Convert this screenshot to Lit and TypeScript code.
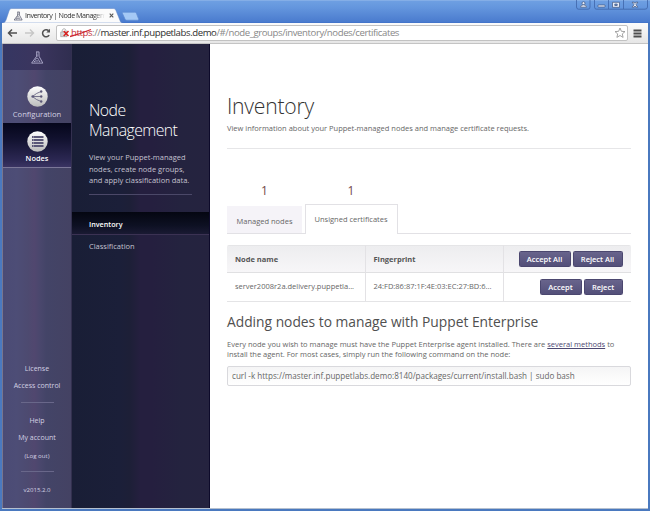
import { LitElement, html, css, svg } from "lit";
import { customElement } from "lit/decorators.js";

const flask = svg`
  <path d="M6 .9h3.2M6.7 1v4.2L1.6 12.1h11.2L9 5.2V1" fill="none" stroke="currentColor" stroke-width="1"/>
  <circle cx="7" cy="8.7" r="1.5" fill="none" stroke="currentColor" stroke-width=".8"/>
  <circle cx="4.7" cy="10.5" r=".8" fill="currentColor"/>
  <circle cx="9.5" cy="10.3" r=".8" fill="currentColor"/>
  <path d="M7 3.4v2.4" stroke="currentColor" stroke-width=".9"/>`;

@customElement("browser-chrome")
export class BrowserChrome extends LitElement {
  static styles = css`
    :host { display: block; font-family: "Open Sans", "Noto Sans", sans-serif; }
    svg { display: block; flex: none; }
    .title {
      height: 23px; position: relative; display: flex; align-items: flex-end;
      background: linear-gradient(#9abdeb 0, #6e9fe2 1px, #6597de 7px, #4a7bce 22px, #3c6ec6 23px);
    }
    .shape { position: absolute; left: 0; top: 8px; }
    .tab {
      position: relative; display: flex; align-items: center; height: 15px;
      margin-left: 13px; width: 104px; color: #4d5166;
    }
    .name {
      width: 80px; margin-left: 2px; white-space: nowrap;
      font: 7.2px/15px "Open Sans", sans-serif; letter-spacing: -.5px; color: #333;
      -webkit-mask-image: linear-gradient(90deg, #000 86%, transparent);
      mask-image: linear-gradient(90deg, #000 86%, transparent);
    }
    .close { margin-left: 4px; }
    .controls { position: absolute; right: 1px; top: 0; }
    .bar {
      height: 21px; box-sizing: border-box; display: flex; align-items: center;
      margin: 0 2px; padding: 0 6px 0 5px; color: #505050;
      background: linear-gradient(#fbfbfb, #e6e6e6); border-bottom: 1px solid #c4c4c4;
    }
    .nav { display: flex; gap: 6px; width: 49px; }
    .omni {
      flex: 1; height: 16px; box-sizing: border-box; border: 1px solid #c2c2c2;
      border-radius: 2px; background: #fff; display: flex; align-items: center;
      padding: 0 1px 0 3px;
    }
    .url {
      flex: 1; margin-left: 1px; font: 9.6px/14px "Open Sans", sans-serif;
      white-space: nowrap; color: #888; letter-spacing: -.42px;
    }
    .host { color: #2e2e2e; }
    .bad { color: #c32c35; position: relative; display: inline-block; }
    .strike { position: absolute; left: -1px; top: 2px; }
    .menu { margin-left: 5px; }
  `;
  render() {
    return html`
      <div class="title">
        <svg class="shape" width="142" height="15" viewBox="0 0 142 15">
          <path d="M2 15c2.500 0 3-1 4-3L9 3c.8-2 1.500-2.500 3-2.500h101c1.500 0 2.500.5 3.200 2.500l4 10c.5 1.500 1.300 2 3 2z" fill="#fbfbfb" stroke="#5a82c4" stroke-width=".5"/>
          <path d="M123 4.200h11.500c1.200 0 1.700.4 2.100 1.600l1.800 4.600c.4 1.200 0 1.800-1 1.800H127c-1.200 0-1.800-.4-2.200-1.600l-2.300-5c-.3-.9 0-1.400.5-1.400z" fill="#a4c8f5" stroke="#5d8bd2" stroke-width=".7"/>
        </svg>
        <div class="tab">
          <svg width="10" height="10" viewBox="0 0 14 13">${flask}</svg>
          <span class="name">Inventory | Node Managem</span>
          <svg class="close" width="5" height="5" viewBox="0 0 5 5"><path d="M.7.7l3.600 3.600M4.300.7L.7 4.300" stroke="#555" stroke-width="1.100"/></svg>
        </div>
        <svg class="controls" width="73" height="10" viewBox="0 0 73 10">
          <g fill="none" stroke="#3f65a8" stroke-width=".8">
            <path d="M.5 0v7q0 2.200 2 2.200h9.500q2 0 2-2.200V0M18.500 0v7q0 2.200 2 2.200H69q2.500 0 2.500-2.200V0M32.500 0v9M47.500 0v9"/>
          </g>
          <g fill="#e8eefa" stroke="#41547b" stroke-width=".7">
            <circle cx="7.500" cy="3.200" r="1.500"/><path d="M4.500 7.200q.2-2.400 3-2.400t3 2.400z"/>
            <rect x="22" y="5" width="7" height="2" rx=".4"/>
            <path fill-rule="evenodd" d="M36.500 2.300h7v5h-7zM38.800 4v1.500h2.400V4z"/>
            <path d="M56.200 2.200h2l.8 1.200.8-1.200h2L60 4.700l1.800 2.500h-2L59 6l-.8 1.200h-2L58 4.700z"/>
          </g>
        </svg>
      </div>
      <div class="bar">
        <div class="nav">
          <svg width="11" height="10" viewBox="0 0 11 10"><path d="M10 5H1.800M5 1.500L1.500 5 5 8.500" fill="none" stroke="#505050" stroke-width="1.500"/></svg>
          <svg width="11" height="10" viewBox="0 0 11 10"><path d="M1 5h8.200M6 1.500L9.500 5 6 8.500" fill="none" stroke="#c6c6c6" stroke-width="1.400"/></svg>
          <svg width="10" height="10" viewBox="0 0 10 10"><path d="M8.200 7.200A3.600 3.600 0 1 1 7.600 2.600" fill="none" stroke="#505050" stroke-width="1.500"/><path d="M9 .8v3.700H5.300z" fill="#505050"/></svg>
        </div>
        <div class="omni">
          <svg width="10" height="10" viewBox="0 0 10 10">
            <path d="M2.200 4V2.800C2.200.2 6 .2 6 2.800V4" fill="none" stroke="#aaa" stroke-width="1"/>
            <rect x=".8" y="4" width="6" height="4.800" fill="#d6d6d6" stroke="#999" stroke-width=".6"/>
            <path d="M3.700 3l4.800 5M8.500 3L3.700 8" stroke="#d9201f" stroke-width="1.500"/>
          </svg>
          <div class="url"><span class="bad">https<svg class="strike" width="23" height="10" viewBox="0 0 23 10"><path d="M0 8.500Q10 6 21 1.500" fill="none" stroke="#cc2730" stroke-width="1.300"/></svg></span>://<span class="host">master.inf.puppetlabs.demo</span>/#/node_groups/inventory/nodes/certificates</div>
          <svg width="12" height="12" viewBox="0 0 12 12"><path d="M6 1l1.400 3.300 3.600.3-2.700 2.300.8 3.500L6 8.500l-3.100 1.900.8-3.500L1 4.600l3.600-.3z" fill="#fff" stroke="#999" stroke-width=".9"/></svg>
        </div>
        <svg class="menu" width="9" height="9" viewBox="0 0 9 9"><path d="M.5 1.500h8M.5 4.500h8M.5 7.500h8" stroke="#4d4d4d" stroke-width="1.800"/></svg>
      </div>`;
  }
}

@customElement("main-rail")
export class MainRail extends LitElement {
  static styles = css`
    :host {
      display: flex; flex-direction: column; width: 70px; box-sizing: border-box;
      font-family: "Open Sans", sans-serif; color: #d3d1e3; text-align: center;
      background: linear-gradient(90deg, #4b4b75 0, #4d4d76 20%, #4d4a70 37%, #51476f 46%, #4a476d 54%, #434467 64%, #444263 100%);
      border-left: 1px solid #77768f; border-right: 1px solid #33304f;
    }
    svg { display: block; }
    .logo {
      height: 26px; display: flex; justify-content: center; padding-top: 7px; box-sizing: border-box; color: #a6a3c4;
      background: linear-gradient(90deg, #353662, #3b355e 50%, #302e50);
    }
    .item { display: flex; flex-direction: column; align-items: center; font-size: 7.600px; line-height: 12px; }
    .conf { height: 53px; padding-top: 16px; box-sizing: border-box; }
    .nodes {
      height: 45px; padding-top: 8px; box-sizing: border-box; color: #fff; font-weight: 600; font-size: 7.400px;
      background: linear-gradient(#05061b, #11112e 35%, #2c2853 85%, #3a3463); border-bottom: 1px solid #7b7798;
    }
    .item span { margin-top: 1px; }
    .nodes span { margin-top: 0; }
    .foot { margin-top: auto; display: flex; flex-direction: column; align-items: center; font-size: 7px; line-height: 17.300px; padding-bottom: 10px; }
    .rule { width: 33px; height: 1px; background: #69678a; margin: 8px 0 9px; }
    .small { font-size: 6.100px; }
    .ver { font-size: 6.100px; line-height: 17px; }
    .last { margin: 7px 0 9px; }
  `;
  render() {
    const disc = svg`
      <defs><linearGradient id="g" x1="0" y1="0" x2="0" y2="1"><stop offset="0" stop-color="#fff"/><stop offset="1" stop-color="#bbb"/></linearGradient></defs>
      <circle cx="10.500" cy="10.500" r="10.200" fill="url(#g)"/>`;
    return html`
      <div class="logo"><svg width="14" height="13" viewBox="0 0 14 13">${flask}</svg></div>
      <div class="item conf">
        <svg width="21" height="21" viewBox="0 0 21 21">${disc}
          <path d="M14 5.500L9.500 7.500 5.500 10.500l4 3 4.500 2M5.500 10.500h8.500" fill="none" stroke="#5b5878" stroke-width=".8"/>
          <g fill="#5b5878"><circle cx="5.700" cy="10.500" r="1.300"/><circle cx="14.200" cy="5.500" r="1.200"/><circle cx="14.200" cy="10.500" r="1.200"/><circle cx="14.200" cy="15.500" r="1.200"/></g>
        </svg>
        <span>Configuration</span>
      </div>
      <div class="item nodes">
        <svg width="21" height="21" viewBox="0 0 21 21">${disc}
          <g fill="#5b5878"><rect x="5" y="5" width="11.500" height="2"/><rect x="5" y="8" width="11.500" height="2"/><rect x="5" y="11" width="11.500" height="2"/><rect x="5" y="14" width="11.500" height="2"/></g>
          <path d="M6 6h1M6 9h1M6 12h1M6 15h1" stroke="#ccc" stroke-width=".8"/>
        </svg>
        <span>Nodes</span>
      </div>
      <div class="foot">
        <div>License</div><div>Access control</div>
        <div class="rule"></div>
        <div>Help</div><div>My account</div><div class="small">(Log out)</div>
        <div class="rule last"></div>
        <div class="ver">v2015.2.0</div>
      </div>`;
  }
}

@customElement("section-nav")
export class SectionNav extends LitElement {
  static styles = css`
    :host {
      display: block; width: 138px; box-sizing: border-box; border-right: 1px solid #0d0a2a;
      font-family: "Open Sans", sans-serif; color: #c4c2d0;
      background: linear-gradient(90deg, #191e36 0, #1b1f39 35%, #1d1f37 42%, #251f3f 50%, #251f3f 58%, #24233f 80%, #25233f 100%);
    }
    h2 { margin: 0; padding: 57px 0 0 17px; font: 300 15.800px/19.500px "Open Sans", sans-serif; color: #fff; letter-spacing: -.55px; }
    p { margin: 12px 0 0 17px; font-size: 7.500px; line-height: 11.500px; white-space: nowrap; }
    .rule { height: 1px; width: 103px; margin: 7px 0 17px 17px; background: #4b4868; }
    .row { height: 23px; box-sizing: border-box; padding-left: 17px; font-size: 7.500px; line-height: 23px; }
    .active { color: #fff; font-weight: 600; font-size: 7.200px; line-height: 24px; background: linear-gradient(#040611, #0d1022 60%, #1a1a33); border-bottom: 1px solid #3b3253; }
  `;
  render() {
    return html`
      <h2>Node<br />Management</h2>
      <p>View your Puppet-managed<br />nodes, create node groups,<br />and apply classification data.</p>
      <div class="rule"></div>
      <div class="row active">Inventory</div>
      <div class="row">Classification</div>`;
  }
}

@customElement("inventory-page")
export class InventoryPage extends LitElement {
  static styles = css`
    :host {
      display: block; flex: 1; min-width: 0; box-sizing: border-box; background: #fff;
      padding: 47px 17.500px 0 17px; font-family: "Open Sans", sans-serif; color: #666; font-size: 7.500px;
    }
    h1 { margin: 0; font: 300 21.200px/30px "Open Sans", sans-serif; color: #333; letter-spacing: -.25px; }
    .sub { margin-top: 2px; line-height: 11px; font-size: 7.500px; white-space: nowrap; }
    .rule { height: 1px; background: #e6e6e8; margin: 14px 0 33px; }
    .tabs { display: flex; align-items: flex-end; height: 51px; border-bottom: 1px solid #e2e1e5; }
    .group { display: flex; flex-direction: column; align-items: center; }
    .count { font-size: 12px; line-height: 16px; color: #734949; }
    .count.one { margin-bottom: 7px; }
    .count.two { margin-bottom: 5px; }
    .tab { box-sizing: border-box; white-space: nowrap; text-align: center; font-size: 7.500px; }
    .idle { width: 75px; height: 27px; line-height: 31px; background: #f5f3f8; }
    .open { width: 93px; height: 30px; margin-bottom: -1px; line-height: 28px; background: #fff; border: 1px solid #e2e1e5; border-bottom: 0; }
    .second { margin-left: 2.500px; }
    .table {
      margin-top: 11px; display: grid; grid-template-columns: 138.500px 138.500px 1fr; border-bottom: 1px solid #e4e4e6;
      border-radius: 2px 2px 0 0; overflow: hidden;
    }
    .cell { height: 28px; box-sizing: border-box; line-height: 27px; padding-left: 8px; white-space: nowrap; border-right: 1px solid #e3e2e5; }
    .head { font-weight: 700; color: #555; background: linear-gradient(#ededef, #f7f6f8); border-bottom: 1px solid #e0e0e2; border-top: 1px solid #e5e5e7; }
    .act { display: flex; justify-content: flex-end; align-items: center; gap: 2px; padding: 0 8px 0 0; border-right: 0; }
    .btn {
      height: 16px; box-sizing: border-box; font-size: 7.500px; line-height: 14px; font-weight: 600; color: #fff; text-align: center;
      background: linear-gradient(#68648c, #534f79); border: 1px solid #4b476f; border-radius: 1.500px;
    }
    .w52 { width: 52px; } .w50 { width: 50px; } .w42 { width: 42px; } .w39 { width: 39px; }
    h3 { margin: 10px 0 0; font: 400 13.800px/20px "Open Sans", sans-serif; color: #505050; white-space: nowrap; }
    .text { margin-top: 7px; font-size: 7.500px; line-height: 10.400px; white-space: nowrap; }
    .link { color: #4d4871; text-decoration: underline; }
    .code {
      margin-top: 6px; height: 20px; box-sizing: border-box; border: 1px solid #d9d9dd; border-radius: 2px; color: #666;
      background: linear-gradient(#f5f5f6, #fff); padding-left: 4px; font-size: 8.100px; line-height: 18px; white-space: nowrap;
    }
  `;
  render() {
    return html`
      <h1>Inventory</h1>
      <div class="sub">View information about your Puppet-managed nodes and manage certificate requests.</div>
      <div class="rule"></div>
      <div class="tabs">
        <div class="group"><div class="count one">1</div><div class="tab idle">Managed nodes</div></div>
        <div class="group second"><div class="count two">1</div><div class="tab open">Unsigned certificates</div></div>
      </div>
      <div class="table">
        <div class="cell head">Node name</div>
        <div class="cell head">Fingerprint</div>
        <div class="cell head act"><div class="btn w52">Accept All</div><div class="btn w50">Reject All</div></div>
        <div class="cell">server2008r2a.delivery.puppetla...</div>
        <div class="cell">24:FD:86:87:1F:4E:03:EC:27:BD:6...</div>
        <div class="cell act"><div class="btn w42">Accept</div><div class="btn w39">Reject</div></div>
      </div>
      <h3>Adding nodes to manage with Puppet Enterprise</h3>
      <div class="text">Every node you wish to manage must have the Puppet Enterprise agent installed. There are <span class="link">several methods</span> to<br />install the agent. For most cases, simply run the following command on the node:</div>
      <div class="code">curl -k https://master.inf.puppetlabs.demo:8140/packages/current/install.bash | sudo bash</div>`;
  }
}

@customElement("app-root")
export class AppRoot extends LitElement {
  static styles = css`
    :host { display: flex; flex-direction: column; width: 650px; height: 511px; overflow: hidden; background: #4a79bf; }
    .body { flex: 1; display: flex; min-height: 0; margin: 0 2px 2px; box-sizing: border-box; border-bottom: 1px solid #b5c0cf; }
  `;
  render() {
    return html`
      <browser-chrome></browser-chrome>
      <div class="body">
        <main-rail></main-rail>
        <section-nav></section-nav>
        <inventory-page></inventory-page>
      </div>`;
  }
}
